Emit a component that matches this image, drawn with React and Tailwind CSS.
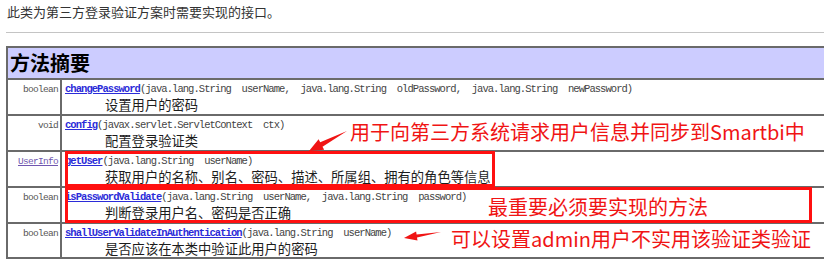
import React from "react";

const cjk = { fontFamily: '"Noto Sans CJK SC", "Noto Sans", sans-serif' };
const mono = { fontFamily: '"Liberation Mono", "DejaVu Sans Mono", monospace' };

const rows = [
  {
    type: "boolean",
    name: "changePassword",
    args: "(java.lang.String  userName,  java.lang.String  oldPassword,  java.lang.String  newPassword)",
    desc: "设置用户的密码",
  },
  {
    type: "void",
    name: "config",
    args: "(javax.servlet.ServletContext  ctx)",
    desc: "配置登录验证类",
  },
  {
    type: "UserInfo",
    typeLink: true,
    name: "getUser",
    args: "(java.lang.String  userName)",
    desc: "获取用户的名称、别名、密码、描述、所属组、拥有的角色等信息",
  },
  {
    type: "boolean",
    name: "isPasswordValidate",
    args: "(java.lang.String  userName,  java.lang.String  password)",
    desc: "判断登录用户名、密码是否正确",
  },
  {
    type: "boolean",
    name: "shallUserValidateInAuthentication",
    args: "(java.lang.String  userName)",
    desc: "是否应该在本类中验证此用户的密码",
  },
];

function MethodRow({ row, last }) {
  return (
    <div className={`flex ${last ? "h-[33px]" : "h-[36px] border-b-2 border-[#6a6a6a]"}`}>
      <div
        className={`w-[54px] shrink-0 border-r-2 border-[#6a6a6a] pr-[2px] pt-[4px] text-right text-[9.5px] leading-[12px] tracking-[-0.7px] ${
          row.typeLink ? "text-[#7057b0] underline" : "text-[#555]"
        }`}
        style={mono}
      >
        {row.type}
      </div>
      <div className="flex-1 pl-[3px] pt-[3px]">
        <div className="whitespace-pre text-[10.5px] leading-[13px] tracking-[-0.95px] text-[#444]" style={mono}>
          <span className="font-bold text-[#2b2bd8] underline">{row.name}</span>
          {row.args}
        </div>
        <div className="pl-[40px] text-[13.3px] leading-[17px] text-[#1c1c1c]" style={cjk}>
          {row.desc}
        </div>
      </div>
    </div>
  );
}

export default function App() {
  return (
    <div className="relative h-[268px] w-[824px] overflow-hidden bg-white">
      <p className="pl-[7px] pt-[4px] text-[13px] leading-[16px] text-[#333]" style={cjk}>
        此类为第三方登录验证方案时需要实现的接口。
      </p>
      <div className="ml-[6px] mt-[12px] h-px bg-[#c4c4c4]" />

      <div className="ml-[6px] mt-[13px] w-[840px] border-2 border-[#6a6a6a]">
        <div className="flex h-[32px] items-center border-b-2 border-[#6a6a6a] bg-[#ccccff] pl-[2px]">
          <span className="text-[20px] font-bold leading-none text-black" style={cjk}>
            方法摘要
          </span>
        </div>
        {rows.map((r, i) => (
          <MethodRow key={r.name} row={r} last={i === rows.length - 1} />
        ))}
      </div>

      {/* annotations drawn over the table */}
      <div className="absolute left-[65px] top-[151px] h-[36px] w-[430px] border-[3px] border-[#ff1010]" />
      <div className="absolute left-[65px] top-[187px] h-[36px] w-[747px] border-[3px] border-[#ff1010]" />

      <div className="absolute left-[350px] top-[121px] whitespace-nowrap text-[20px] leading-[22px] text-[#f01414]" style={cjk}>
        用于向第三方系统请求用户信息并同步到Smartbi中
      </div>
      <div className="absolute left-[488px] top-[196px] whitespace-nowrap text-[20px] leading-[22px] text-[#f01414]" style={cjk}>
        最重要必须要实现的方法
      </div>
      <div className="absolute left-[451px] top-[228px] whitespace-nowrap text-[20px] leading-[21px] text-[#f01414]" style={cjk}>
        可以设置admin用户不实用该验证类验证
      </div>

      <svg className="pointer-events-none absolute left-0 top-0" width="824" height="268" viewBox="0 0 824 268">
        <polygon
          fill="#f01414"
          points="347,131 322.5,146.7 324.2,149.8 309,151 318.6,139.2 320.2,142.3"
        />
        <polygon
          fill="#f01414"
          points="441,232 417,237.4 417.5,240.4 404,238 416.1,231.5 416.6,234.4"
        />
      </svg>
    </div>
  );
}
